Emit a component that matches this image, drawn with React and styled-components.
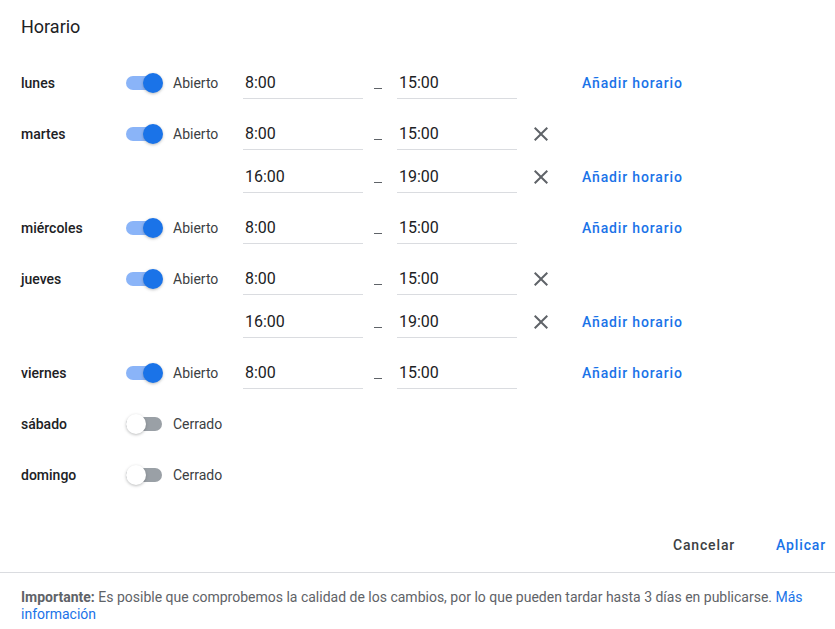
import { useState } from 'react';
import styled, { createGlobalStyle } from 'styled-components';

const GlobalStyle = createGlobalStyle`
  * {
    box-sizing: border-box;
  }

  body {
    margin: 0;
    background: #ffffff;
    font-family: Roboto, 'Liberation Sans', Arial, sans-serif;
    color: #202124;
  }
`;

const initialDays = [
  { name: 'lunes', open: true, slots: [['8:00', '15:00']] },
  { name: 'martes', open: true, slots: [['8:00', '15:00'], ['16:00', '19:00']] },
  { name: 'miércoles', open: true, slots: [['8:00', '15:00']] },
  { name: 'jueves', open: true, slots: [['8:00', '15:00'], ['16:00', '19:00']] },
  { name: 'viernes', open: true, slots: [['8:00', '15:00']] },
  { name: 'sábado', open: false, slots: [] },
  { name: 'domingo', open: false, slots: [] },
];

export default function App() {
  const [days, setDays] = useState(initialDays);

  function toggleDay(index) {
    setDays(
      days.map((day, i) => (i === index ? { ...day, open: !day.open } : day))
    );
  }

  return (
    <>
      <GlobalStyle />
      <Dialog>
        <Body>
          <Title>Horario</Title>
          <DayList>
            {days.map((day, i) => (
              <DayRow key={day.name}>
                <DayName>{day.name}</DayName>
                <Cell>
                  <Switch on={day.open} onClick={() => toggleDay(i)}>
                    <Thumb on={day.open} />
                  </Switch>
                </Cell>
                <Status>{day.open ? 'Abierto' : 'Cerrado'}</Status>
                <Slots>
                  {day.open &&
                    day.slots.map((slot, j) => (
                      <SlotRow key={j}>
                        <TimeInput defaultValue={slot[0]} />
                        <DashCell>
                          <Dash />
                        </DashCell>
                        <TimeInput defaultValue={slot[1]} />
                        <RemoveCell>
                          {day.slots.length > 1 && (
                            <RemoveButton aria-label="Quitar">
                              <svg width="24" height="24" viewBox="0 0 24 24">
                                <path
                                  fill="#5f6368"
                                  d="M19 6.41L17.59 5 12 10.59 6.41 5 5 6.41 10.59 12 5 17.59 6.41 19 12 13.41 17.59 19 19 17.59 13.41 12z"
                                />
                              </svg>
                            </RemoveButton>
                          )}
                        </RemoveCell>
                        {j === day.slots.length - 1 && (
                          <AddLink>Añadir horario</AddLink>
                        )}
                      </SlotRow>
                    ))}
                </Slots>
              </DayRow>
            ))}
          </DayList>
          <Actions>
            <TextButton>Cancelar</TextButton>
            <TextButton primary>Aplicar</TextButton>
          </Actions>
        </Body>
        <Footer>
          <strong>Importante:</strong> Es posible que comprobemos la calidad de
          los cambios, por lo que pueden tardar hasta 3 días en publicarse.{' '}
          <FooterLink>Más información</FooterLink>
        </Footer>
      </Dialog>
    </>
  );
}

const Dialog = styled.div`
  width: 835px;
  min-height: 629px;
  background: #ffffff;
`;

const Body = styled.div`
  padding: 15px 0 9px 21px;
`;

const Title = styled.h2`
  margin: 0 0 22.5px;
  font-size: 18px;
  line-height: 24px;
  font-weight: 400;
  color: #202124;
`;

const DayList = styled.div`
  display: flex;
  flex-direction: column;
  gap: 8px;
`;

const DayRow = styled.div`
  display: grid;
  grid-template-columns: 105px 47px 70px 1fr;
  align-items: start;
`;

const Cell = styled.div`
  height: 43px;
  display: flex;
  align-items: center;
`;

const DayName = styled(Cell)`
  font-size: 14px;
  font-weight: 500;
  color: #202124;
`;

const Status = styled(Cell)`
  font-size: 14px;
  color: #3c4043;
`;

const Switch = styled.div`
  position: relative;
  width: 36px;
  height: 14px;
  border-radius: 7px;
  background: ${(p) => (p.on ? '#8ab4f8' : '#9aa0a6')};
  cursor: pointer;
`;

const Thumb = styled.div`
  position: absolute;
  top: -3px;
  left: ${(p) => (p.on ? '17px' : '0')};
  width: 20px;
  height: 20px;
  border-radius: 50%;
  background: ${(p) => (p.on ? '#1a73e8' : '#ffffff')};
  box-shadow: 0 1px 3px rgba(60, 64, 67, 0.35);
`;

const Slots = styled.div`
  display: flex;
  flex-direction: column;
`;

const SlotRow = styled.div`
  height: 43px;
  display: grid;
  grid-template-columns: 120px 34px 120px 65px auto;
  align-items: center;
`;

const TimeInput = styled.input`
  width: 120px;
  height: 32px;
  padding: 0 2px;
  border: none;
  border-bottom: 1px solid #dadce0;
  background: transparent;
  outline: none;
  font-family: Roboto, 'Liberation Sans', Arial, sans-serif;
  font-size: 16px;
  color: #202124;
`;

const DashCell = styled.div`
  display: flex;
  padding-left: 11px;
`;

const Dash = styled.span`
  width: 8px;
  height: 1px;
  margin-top: 11px;
  background: #5f6368;
`;

const RemoveCell = styled.div`
  display: flex;
  padding-left: 12px;
`;

const RemoveButton = styled.button`
  width: 24px;
  height: 24px;
  padding: 0;
  border: none;
  background: none;
  cursor: pointer;
  display: flex;
`;

const AddLink = styled.span`
  font-size: 14px;
  font-weight: 500;
  letter-spacing: 0.85px;
  color: #1a73e8;
  cursor: pointer;
  white-space: nowrap;
`;

const Actions = styled.div`
  margin-top: 30.5px;
  display: flex;
  justify-content: flex-end;
  gap: 25px;
  padding-right: 1px;
`;

const TextButton = styled.button`
  height: 36px;
  padding: 0 8px;
  border: none;
  background: none;
  font-family: Roboto, 'Liberation Sans', Arial, sans-serif;
  font-size: 14px;
  font-weight: 500;
  letter-spacing: 0.85px;
  color: ${(p) => (p.primary ? '#1a73e8' : '#3c4043')};
  cursor: pointer;
`;

const Footer = styled.p`
  margin: 0;
  padding: 16px 21px 0;
  border-top: 1px solid #dadce0;
  font-size: 14px;
  line-height: 17px;
  color: #5f6368;

  strong {
    font-weight: 700;
  }
`;

const FooterLink = styled.a`
  color: #1a73e8;
  text-decoration: none;
  cursor: pointer;
`;
